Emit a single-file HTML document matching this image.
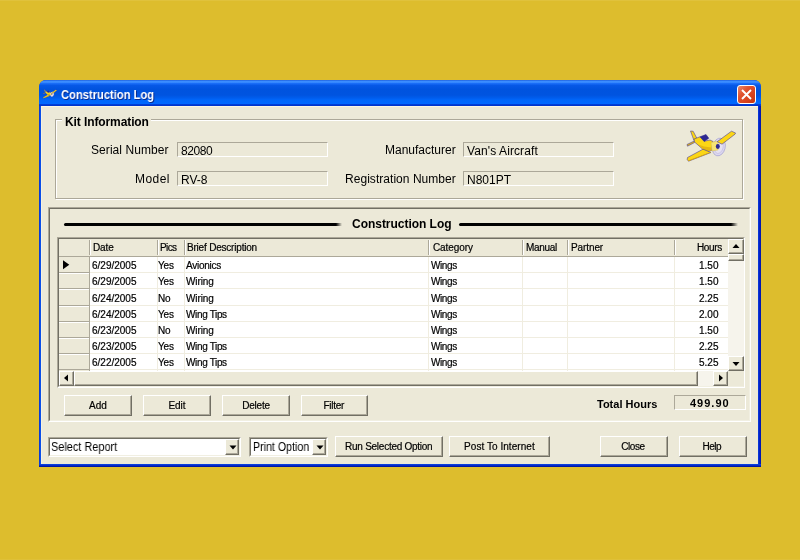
<!DOCTYPE html>
<html>
<head>
<meta charset="utf-8">
<title>Construction Log</title>
<style>
html,body{margin:0;padding:0;}
body{width:800px;height:560px;overflow:hidden;background:#ddbd2d;font-family:"Liberation Sans",sans-serif;position:relative;color:#000;}
.abs{position:absolute;}
.t{position:absolute;white-space:nowrap;line-height:1;will-change:transform;}
#win{left:38.7px;top:80px;width:722.3px;height:386.8px;background:#0a3cdc;border-radius:7px 7px 0 0;overflow:hidden;}
#bl{left:0;top:26px;width:2.5px;height:361px;background:linear-gradient(to right,#0830d0,#0c5af0);}
#br{right:0;top:26px;width:3px;height:361px;background:linear-gradient(to right,#0a44e4 0%,#0424c8 35%,#041cc0 70%,#001298 100%);}
#bb{left:0;bottom:0;width:100%;height:2.8px;background:linear-gradient(to bottom,#0a4ae8 0%,#0428c8 50%,#000e90 100%);}
#title{left:0;top:0;width:723px;height:26px;
 background:linear-gradient(to bottom,#1e5cd8 0%,#3a8cff 4.5%,#3f90ff 8.5%,#1a6ef8 13%,#0658e6 21%,#0053de 36%,#0054e0 58%,#005cec 68%,#0066fa 77%,#0068ff 91%,#0040d8 93.5%,#0030c8 100%);}
#client{left:2.5px;top:26px;width:717.3px;height:358.2px;background:#ece9d8;border-top:1px solid #fbf6e4;box-sizing:border-box;}
#clientedge{left:2.5px;top:26px;width:1.2px;height:358.2px;background:#f6f2e0;}
#ttext{left:22px;top:9px;font-size:12.5px;font-weight:bold;color:#fff;transform:scaleX(0.893);transform-origin:0 0;text-shadow:1px 1px 0 #0a2a8c;}
#close{left:698.5px;top:5px;width:17px;height:17px;border:1px solid #fff;border-radius:3px;
 background:linear-gradient(135deg,#ea8a6c 0%,#e0532f 35%,#d8421c 70%,#c2350f 100%);}
.btn{position:absolute;background:#ece9d8;box-sizing:border-box;border:1px solid;border-color:#fff #716f64 #716f64 #fff;box-shadow:inset -1px -1px 0 #aca899;font-size:10px;text-align:center;}
.btn span{-webkit-text-stroke:0.2px #000;will-change:transform;position:absolute;left:0;right:0;text-align:center;white-space:nowrap;line-height:1;}
.fld{position:absolute;box-sizing:border-box;border:1px solid;border-color:#aca899 #fff #fff #aca899;background:#ece9d8;}
.lbl{font-size:12px;}
.cell{font-size:10px;-webkit-text-stroke:0.2px #000;}
.hl{position:absolute;background:#ece9d8;}
.sbbtn{background:#ece9d8;box-sizing:border-box;border:1px solid;border-color:#fff #716f64 #716f64 #fff;box-shadow:inset -1px -1px 0 #aca899;}
.sbtrack{background:#f6f4ec;}
</style>
</head>
<body>
<div class="abs" style="left:0;top:0;width:800px;height:1px;background:#e0c23c;"></div>
<div class="abs" style="left:0;top:559px;width:800px;height:1px;background:#dfc038;"></div>
<div id="win" class="abs">
 <div id="title" class="abs"></div>
 <div id="client" class="abs"></div>
 <div id="clientedge" class="abs"></div>
 <div id="bl" class="abs"></div><div id="br" class="abs"></div><div id="bb" class="abs"></div>
 <svg class="abs" style="left:3.5px;top:8px" width="17" height="12" viewBox="0 0 17 12"><g transform="translate(1,1.5) scale(0.283) translate(-686.5,-130.5)"><g stroke="#3a30a0" stroke-width="0.9" stroke-linejoin="round">
  <ellipse cx="718.9" cy="147" rx="6.3" ry="9" transform="rotate(14 718.9 147)" fill="#dcd8ee" stroke="#8f88cc" stroke-width="0.5"/>
  <ellipse cx="718.9" cy="147" rx="4.2" ry="6.6" transform="rotate(14 718.9 147)" fill="#e6e2f0" stroke="#b0a8dc" stroke-width="0.4"/>
  <path d="M717 141.8 L731.5 131.2 L735.6 133 L735 134.2 L722 144.2 Z" fill="#fbd616"/>
  <path d="M690.5 131 L693.2 131.3 L696.8 138.2 L694 140.5 L692.5 136.5 Z" fill="#fbd616"/>
  <path d="M687 144.5 L693.8 141.2 L694.6 142.5 L687.5 146.2 Z" fill="#e3b914"/>
  <path d="M694 139 L700 136.8 L704.5 141.2 L710 140 L713 141.5 L711.5 150.5 L708 151.5 L703 149.5 L698 145 L694.5 142 Z" fill="#fbd616"/>
  <path d="M698 144.6 L703 149.2 L708 151.2 L711.5 150.3 L711.3 147.5 L704 146.5 Z" fill="#e6b810" stroke="none"/>
  <path d="M700 136.8 L706 134.5 L708.8 138.2 L704.2 141.5 Z" fill="#2e2890" stroke="#2e2890"/>
  <path d="M703 149.2 L687.5 157.5 L687.2 159.5 L688.5 161.2 L711 152.5 Z" fill="#fbd616"/>
  <path d="M688 160.6 L710.6 152 L711 152.5 L688.5 161.2 Z" fill="#d8a80c" stroke="none"/>
  <path d="M711 142.5 L716.5 141.2 L719 145 L718 150 L712 151 Z" fill="#f7e374" stroke="#cdb648" stroke-width="0.4"/>
  <ellipse cx="717.8" cy="146.5" rx="2" ry="2.4" fill="#2e2890" stroke="none"/>
 </g></g></svg>
 <div id="ttext" class="t">Construction Log</div>
 <div id="close" class="abs">
  <svg width="17" height="17" viewBox="0 0 17 17" style="position:absolute;left:0;top:0"><path d="M4 4 L13 13 M13 4 L4 13" stroke="#fff" stroke-width="1.9" stroke-linecap="butt"/></svg>
 </div>
</div>

<!-- Kit Information group box -->
<div class="abs" style="left:55px;top:119px;width:688px;height:80px;box-sizing:border-box;border:1px solid #aca899;box-shadow:1px 1px 0 #fff, inset 1px 1px 0 #fff;"></div>
<div class="abs" style="left:62px;top:113px;width:89px;height:14px;background:#ece9d8;"></div>
<div class="t" style="left:64.5px;top:115.5px;font-size:12px;font-weight:bold;letter-spacing:-0.1px;">Kit Information</div>

<div class="t lbl" style="right:631px;top:144px;letter-spacing:0.07px;">Serial Number</div>
<div class="fld" style="left:177px;top:142px;width:151px;height:15px;"></div>
<div class="t lbl" style="left:180.5px;top:144.5px;letter-spacing:-0.45px;">82080</div>

<div class="t lbl" style="right:630.5px;top:173px;letter-spacing:0.45px;">Model</div>
<div class="fld" style="left:177px;top:171px;width:151px;height:15px;"></div>
<div class="t lbl" style="left:180.5px;top:173.5px;">RV-8</div>

<div class="t lbl" style="right:344.7px;top:144px;">Manufacturer</div>
<div class="fld" style="left:463px;top:142px;width:151px;height:15px;"></div>
<div class="t lbl" style="left:466.5px;top:144.5px;letter-spacing:0.1px;">Van's Aircraft</div>

<div class="t lbl" style="right:344.7px;top:173px;letter-spacing:0.04px;">Registration Number</div>
<div class="fld" style="left:463px;top:171px;width:151px;height:15px;"></div>
<div class="t lbl" style="left:466.5px;top:173.5px;">N801PT</div>

<!-- plane -->
<svg class="abs" style="left:684px;top:128px" width="56" height="36" viewBox="684 128 56 36">
 <g stroke="#3a30a0" stroke-width="0.55" stroke-linejoin="round">
  <ellipse cx="718.9" cy="147" rx="6.3" ry="9" transform="rotate(14 718.9 147)" fill="#dcd8ee" stroke="#8f88cc" stroke-width="0.5"/>
  <ellipse cx="718.9" cy="147" rx="4.2" ry="6.6" transform="rotate(14 718.9 147)" fill="#e6e2f0" stroke="#b0a8dc" stroke-width="0.4"/>
  <path d="M717 141.8 L731.5 131.2 L735.6 133 L735 134.2 L722 144.2 Z" fill="#fbd616"/>
  <path d="M690.5 131 L693.2 131.3 L696.8 138.2 L694 140.5 L692.5 136.5 Z" fill="#fbd616"/>
  <path d="M687 144.5 L693.8 141.2 L694.6 142.5 L687.5 146.2 Z" fill="#e3b914"/>
  <path d="M694 139 L700 136.8 L704.5 141.2 L710 140 L713 141.5 L711.5 150.5 L708 151.5 L703 149.5 L698 145 L694.5 142 Z" fill="#fbd616"/>
  <path d="M698 144.6 L703 149.2 L708 151.2 L711.5 150.3 L711.3 147.5 L704 146.5 Z" fill="#e6b810" stroke="none"/>
  <path d="M700 136.8 L706 134.5 L708.8 138.2 L704.2 141.5 Z" fill="#2e2890" stroke="#2e2890"/>
  <path d="M703 149.2 L687.5 157.5 L687.2 159.5 L688.5 161.2 L711 152.5 Z" fill="#fbd616"/>
  <path d="M688 160.6 L710.6 152 L711 152.5 L688.5 161.2 Z" fill="#d8a80c" stroke="none"/>
  <path d="M711 142.5 L716.5 141.2 L719 145 L718 150 L712 151 Z" fill="#f7e374" stroke="#cdb648" stroke-width="0.4"/>
  <ellipse cx="717.8" cy="146.5" rx="2" ry="2.4" fill="#2e2890" stroke="none"/>
 </g>
</svg>

<!-- Construction Log frame -->
<div class="abs" style="left:48px;top:207px;width:703px;height:215px;box-sizing:border-box;border:1px solid;border-color:#aca899 #fff #fff #aca899;"></div>
<div class="abs" style="left:49px;top:208px;width:701px;height:213px;box-sizing:border-box;border:1px solid;border-color:#716f64 #f1efe2 #f1efe2 #716f64;"></div>

<div class="abs" style="left:64px;top:222.5px;width:278px;height:3.5px;background:linear-gradient(to right,#000 0,#000 272px,rgba(0,0,0,0) 278px);border-radius:2px 0 0 2px;"></div>
<div class="abs" style="left:458.5px;top:222.5px;width:279px;height:3.5px;background:linear-gradient(to right,#000 0,#000 272px,rgba(0,0,0,0) 279px);border-radius:2px 0 0 2px;"></div>
<div class="t" style="left:351.6px;top:217.6px;font-size:12px;font-weight:bold;letter-spacing:-0.03px;">Construction Log</div>

<!-- grid -->
<div class="abs" style="left:57px;top:237px;width:687.5px;height:150.5px;box-sizing:border-box;border:1px solid;border-color:#aca899 #fff #fff #aca899;"></div>
<div class="abs" style="left:58px;top:238px;width:685.5px;height:148.5px;box-sizing:border-box;border:1px solid;border-color:#716f64 #ece9d8 #f1efe2 #716f64;background:#fff;"></div>
<div class="abs" style="left:59px;top:239px;width:669px;height:17px;background:#ece9d8;"></div>
<div class="abs" style="left:59px;top:256px;width:669px;height:1px;background:#aca899;"></div>
<div class="abs" style="left:59px;top:257px;width:30px;height:113.5px;background:#ece9d8;"></div>
<div class="abs" style="left:89px;top:240px;width:1px;height:15px;background:#aca899;"></div>
<div class="abs" style="left:90px;top:240px;width:1px;height:15px;background:#fff;"></div>
<div class="abs" style="left:157px;top:240px;width:1px;height:15px;background:#aca899;"></div>
<div class="abs" style="left:158px;top:240px;width:1px;height:15px;background:#fff;"></div>
<div class="abs" style="left:184px;top:240px;width:1px;height:15px;background:#aca899;"></div>
<div class="abs" style="left:185px;top:240px;width:1px;height:15px;background:#fff;"></div>
<div class="abs" style="left:428px;top:240px;width:1px;height:15px;background:#aca899;"></div>
<div class="abs" style="left:429px;top:240px;width:1px;height:15px;background:#fff;"></div>
<div class="abs" style="left:522px;top:240px;width:1px;height:15px;background:#aca899;"></div>
<div class="abs" style="left:523px;top:240px;width:1px;height:15px;background:#fff;"></div>
<div class="abs" style="left:567px;top:240px;width:1px;height:15px;background:#aca899;"></div>
<div class="abs" style="left:568px;top:240px;width:1px;height:15px;background:#fff;"></div>
<div class="abs" style="left:674px;top:240px;width:1px;height:15px;background:#aca899;"></div>
<div class="abs" style="left:675px;top:240px;width:1px;height:15px;background:#fff;"></div>
<div class="abs" style="left:89px;top:257px;width:1px;height:113.5px;background:#aca899;"></div>
<div class="abs" style="left:157px;top:257px;width:1px;height:113.5px;background:#f0ede0;"></div>
<div class="abs" style="left:184px;top:257px;width:1px;height:113.5px;background:#f0ede0;"></div>
<div class="abs" style="left:428px;top:257px;width:1px;height:113.5px;background:#f0ede0;"></div>
<div class="abs" style="left:522px;top:257px;width:1px;height:113.5px;background:#f0ede0;"></div>
<div class="abs" style="left:567px;top:257px;width:1px;height:113.5px;background:#f0ede0;"></div>
<div class="abs" style="left:674px;top:257px;width:1px;height:113.5px;background:#f0ede0;"></div>
<div class="abs" style="left:59px;top:272.2px;width:30px;height:1px;background:#aca899;"></div>
<div class="abs" style="left:59px;top:273.2px;width:30px;height:1px;background:#fff;"></div>
<div class="abs" style="left:90px;top:272.2px;width:638px;height:1px;background:#f0ede0;"></div>
<div class="abs" style="left:59px;top:288.4px;width:30px;height:1px;background:#aca899;"></div>
<div class="abs" style="left:59px;top:289.4px;width:30px;height:1px;background:#fff;"></div>
<div class="abs" style="left:90px;top:288.4px;width:638px;height:1px;background:#f0ede0;"></div>
<div class="abs" style="left:59px;top:304.6px;width:30px;height:1px;background:#aca899;"></div>
<div class="abs" style="left:59px;top:305.6px;width:30px;height:1px;background:#fff;"></div>
<div class="abs" style="left:90px;top:304.6px;width:638px;height:1px;background:#f0ede0;"></div>
<div class="abs" style="left:59px;top:320.8px;width:30px;height:1px;background:#aca899;"></div>
<div class="abs" style="left:59px;top:321.8px;width:30px;height:1px;background:#fff;"></div>
<div class="abs" style="left:90px;top:320.8px;width:638px;height:1px;background:#f0ede0;"></div>
<div class="abs" style="left:59px;top:337.0px;width:30px;height:1px;background:#aca899;"></div>
<div class="abs" style="left:59px;top:338.0px;width:30px;height:1px;background:#fff;"></div>
<div class="abs" style="left:90px;top:337.0px;width:638px;height:1px;background:#f0ede0;"></div>
<div class="abs" style="left:59px;top:353.2px;width:30px;height:1px;background:#aca899;"></div>
<div class="abs" style="left:59px;top:354.2px;width:30px;height:1px;background:#fff;"></div>
<div class="abs" style="left:90px;top:353.2px;width:638px;height:1px;background:#f0ede0;"></div>
<div class="abs" style="left:59px;top:369.4px;width:30px;height:1px;background:#aca899;"></div>
<div class="abs" style="left:90px;top:369.4px;width:638px;height:1px;background:#f0ede0;"></div>
<div class="t cell" style="left:92.7px;top:243px;letter-spacing:-0.1px;">Date</div>
<div class="t cell" style="left:159.8px;top:243px;letter-spacing:-0.6px;">Pics</div>
<div class="t cell" style="left:187px;top:243px;letter-spacing:-0.2px;">Brief Description</div>
<div class="t cell" style="left:432.5px;top:243px;letter-spacing:-0.1px;">Category</div>
<div class="t cell" style="left:526.3px;top:243px;letter-spacing:-0.3px;">Manual</div>
<div class="t cell" style="left:571.3px;top:243px;letter-spacing:-0.1px;">Partner</div>
<div class="t cell" style="right:78.2px;top:243px;letter-spacing:-0.35px;">Hours</div>
<div class="t cell" style="left:91.8px;top:261.1px;">6/29/2005</div>
<div class="t cell" style="left:158.3px;top:261.1px;letter-spacing:-0.15px;">Yes</div>
<div class="t cell" style="left:185.8px;top:261.1px;letter-spacing:-0.25px;">Avionics</div>
<div class="t cell" style="left:430.5px;top:261.1px;letter-spacing:-0.4px;">Wings</div>
<div class="t cell" style="right:82px;top:261.1px;">1.50</div>
<div class="t cell" style="left:91.8px;top:277.3px;">6/29/2005</div>
<div class="t cell" style="left:158.3px;top:277.3px;letter-spacing:-0.15px;">Yes</div>
<div class="t cell" style="left:185.8px;top:277.3px;letter-spacing:-0.1px;">Wiring</div>
<div class="t cell" style="left:430.5px;top:277.3px;letter-spacing:-0.4px;">Wings</div>
<div class="t cell" style="right:82px;top:277.3px;">1.50</div>
<div class="t cell" style="left:91.8px;top:293.5px;">6/24/2005</div>
<div class="t cell" style="left:158.3px;top:293.5px;letter-spacing:-0.15px;">No</div>
<div class="t cell" style="left:185.8px;top:293.5px;letter-spacing:-0.1px;">Wiring</div>
<div class="t cell" style="left:430.5px;top:293.5px;letter-spacing:-0.4px;">Wings</div>
<div class="t cell" style="right:82px;top:293.5px;">2.25</div>
<div class="t cell" style="left:91.8px;top:309.7px;">6/24/2005</div>
<div class="t cell" style="left:158.3px;top:309.7px;letter-spacing:-0.15px;">Yes</div>
<div class="t cell" style="left:185.8px;top:309.7px;letter-spacing:-0.35px;">Wing Tips</div>
<div class="t cell" style="left:430.5px;top:309.7px;letter-spacing:-0.4px;">Wings</div>
<div class="t cell" style="right:82px;top:309.7px;">2.00</div>
<div class="t cell" style="left:91.8px;top:325.9px;">6/23/2005</div>
<div class="t cell" style="left:158.3px;top:325.9px;letter-spacing:-0.15px;">No</div>
<div class="t cell" style="left:185.8px;top:325.9px;letter-spacing:-0.1px;">Wiring</div>
<div class="t cell" style="left:430.5px;top:325.9px;letter-spacing:-0.4px;">Wings</div>
<div class="t cell" style="right:82px;top:325.9px;">1.50</div>
<div class="t cell" style="left:91.8px;top:342.1px;">6/23/2005</div>
<div class="t cell" style="left:158.3px;top:342.1px;letter-spacing:-0.15px;">Yes</div>
<div class="t cell" style="left:185.8px;top:342.1px;letter-spacing:-0.35px;">Wing Tips</div>
<div class="t cell" style="left:430.5px;top:342.1px;letter-spacing:-0.4px;">Wings</div>
<div class="t cell" style="right:82px;top:342.1px;">2.25</div>
<div class="t cell" style="left:91.8px;top:358.3px;">6/22/2005</div>
<div class="t cell" style="left:158.3px;top:358.3px;letter-spacing:-0.15px;">Yes</div>
<div class="t cell" style="left:185.8px;top:358.3px;letter-spacing:-0.35px;">Wing Tips</div>
<div class="t cell" style="left:430.5px;top:358.3px;letter-spacing:-0.4px;">Wings</div>
<div class="t cell" style="right:82px;top:358.3px;">5.25</div>
<svg class="abs" style="left:62px;top:260px" width="8" height="10" viewBox="0 0 8 10"><path d="M1 0.3 L7.3 4.75 L1 9.2 Z" fill="#000"/></svg>
<div class="abs sbtrack" style="left:728px;top:239px;width:15.5px;height:131.5px;"></div>
<div class="abs sbbtn" style="left:728px;top:239px;width:15.5px;height:14.5px;"></div>
<svg class="abs" style="left:732px;top:243px" width="8" height="6" viewBox="0 0 8 6"><path d="M0.5 5 L4 1 L7.5 5 Z" fill="#000"/></svg>
<div class="abs sbbtn" style="left:728px;top:253.7px;width:15.5px;height:7.6px;"></div>
<div class="abs sbbtn" style="left:728px;top:356px;width:15.5px;height:14.5px;"></div>
<svg class="abs" style="left:732px;top:361px" width="8" height="6" viewBox="0 0 8 6"><path d="M0.5 1 L4 5 L7.5 1 Z" fill="#000"/></svg>
<div class="abs sbtrack" style="left:59px;top:370.5px;width:669px;height:15.5px;"></div>
<div class="abs sbbtn" style="left:59px;top:370.5px;width:15px;height:15.5px;"></div>
<svg class="abs" style="left:63px;top:374.3px" width="6" height="8" viewBox="0 0 6 8"><path d="M5 0.5 L1 4 L5 7.5 Z" fill="#000"/></svg>
<div class="abs sbbtn" style="left:74px;top:370.5px;width:624px;height:15.5px;"></div>
<div class="abs sbbtn" style="left:713px;top:370.5px;width:15px;height:15.5px;"></div>
<svg class="abs" style="left:718px;top:374.3px" width="6" height="8" viewBox="0 0 6 8"><path d="M1 0.5 L5 4 L1 7.5 Z" fill="#000"/></svg>
<div class="abs" style="left:728px;top:370.5px;width:15.5px;height:15.5px;background:#ece9d8;"></div>
<!-- action buttons -->
<div class="btn" style="left:64px;top:395px;width:68px;height:21px;"><span style="top:4.5px;left:0px;right:0px;font-size:10px;letter-spacing:0px;">Add</span></div>
<div class="btn" style="left:143px;top:395px;width:68px;height:21px;"><span style="top:4.5px;left:0px;right:0px;font-size:10px;letter-spacing:0px;">Edit</span></div>
<div class="btn" style="left:222px;top:395px;width:68px;height:21px;"><span style="top:4.5px;left:0px;right:0px;font-size:10px;letter-spacing:-0.2px;">Delete</span></div>
<div class="btn" style="left:300.5px;top:395px;width:67.5px;height:21px;"><span style="top:4.5px;left:-0.6px;right:0.6px;font-size:10px;letter-spacing:-0.25px;">Filter</span></div>
<div class="t" style="left:597px;top:398.5px;font-size:11px;font-weight:bold;">Total Hours</div>
<div class="fld" style="left:674px;top:395px;width:71.5px;height:14.5px;"></div>
<div class="t" style="left:690px;top:397.5px;font-size:11px;font-weight:bold;letter-spacing:1px;">499.90</div>
<!-- bottom row -->
<div class="abs" style="left:48px;top:436.5px;width:192.5px;height:20.5px;box-sizing:border-box;border:1px solid;border-color:#aca899 #fff #fff #aca899;"></div>
<div class="abs" style="left:49px;top:437.5px;width:190.5px;height:18.5px;box-sizing:border-box;border:1px solid;border-color:#716f64 #f1efe2 #f1efe2 #716f64;background:#fff;"></div>
<div class="t" style="left:51.3px;top:440.8px;font-size:12px;transform:scaleX(0.911);transform-origin:0 0;">Select Report</div>
<div class="abs sbbtn" style="left:225px;top:438.5px;width:14px;height:16.5px;"></div>
<svg class="abs" style="left:228.5px;top:445px" width="8" height="5" viewBox="0 0 8 5"><path d="M0.5 0.5 L7.5 0.5 L4 4.5 Z" fill="#000"/></svg>
<div class="abs" style="left:249px;top:436.5px;width:78.5px;height:20.5px;box-sizing:border-box;border:1px solid;border-color:#aca899 #fff #fff #aca899;"></div>
<div class="abs" style="left:250px;top:437.5px;width:76.5px;height:18.5px;box-sizing:border-box;border:1px solid;border-color:#716f64 #f1efe2 #f1efe2 #716f64;background:#fff;"></div>
<div class="t" style="left:252.5px;top:440.8px;font-size:12px;transform:scaleX(0.887);transform-origin:0 0;">Print Option</div>
<div class="abs sbbtn" style="left:312px;top:438.5px;width:14px;height:16.5px;"></div>
<svg class="abs" style="left:315.5px;top:445px" width="8" height="5" viewBox="0 0 8 5"><path d="M0.5 0.5 L7.5 0.5 L4 4.5 Z" fill="#000"/></svg>
<div class="btn" style="left:335px;top:436px;width:107.5px;height:21px;"><span style="top:4.5px;left:0px;right:0px;font-size:10px;letter-spacing:-0.26px;">Run Selected Option</span></div>
<div class="btn" style="left:449px;top:436px;width:100.8px;height:21px;"><span style="top:4.5px;left:0px;right:0px;font-size:10px;letter-spacing:0.05px;">Post To Internet</span></div>
<div class="btn" style="left:600px;top:436px;width:68px;height:21px;"><span style="top:4.5px;left:-0.8px;right:0.8px;font-size:10px;letter-spacing:-0.4px;">Close</span></div>
<div class="btn" style="left:679px;top:436px;width:67.5px;height:21px;"><span style="top:4.5px;left:-1.2px;right:1.2px;font-size:10px;letter-spacing:-0.5px;">Help</span></div>
</body>
</html>
